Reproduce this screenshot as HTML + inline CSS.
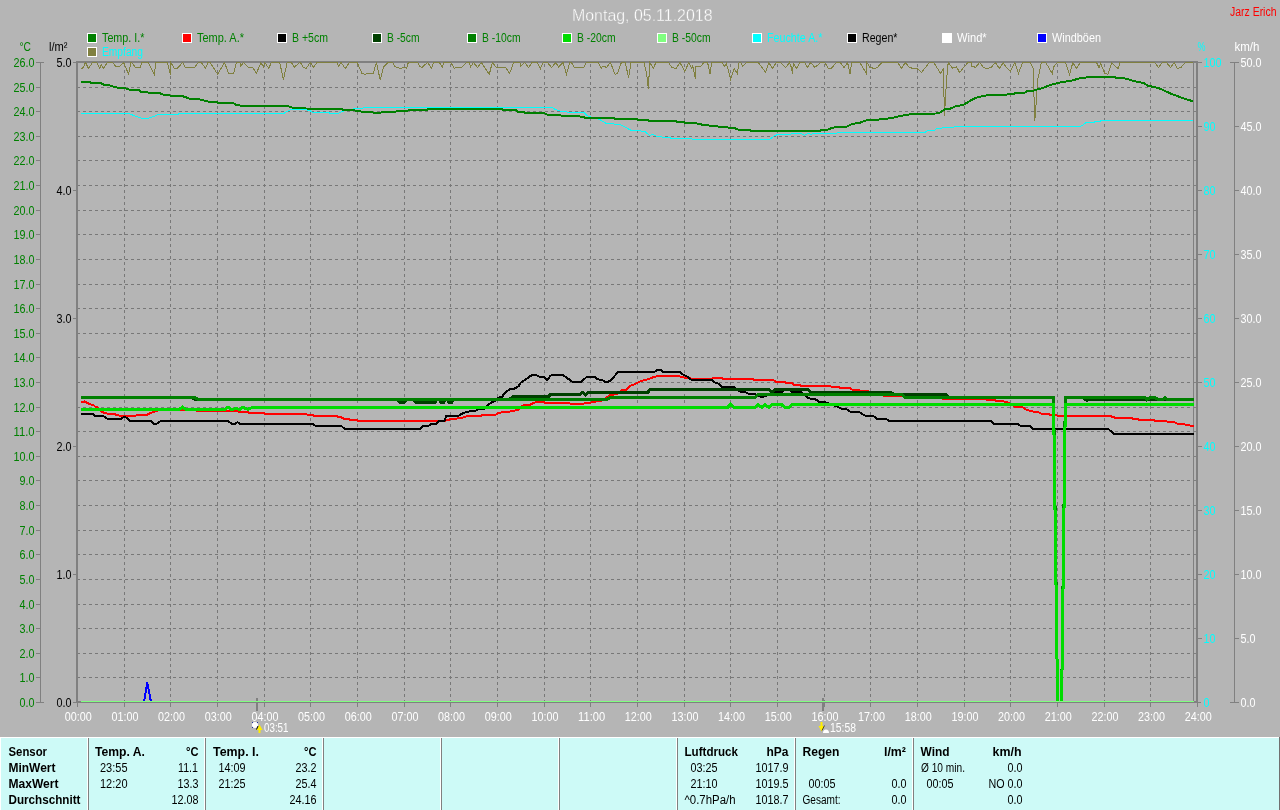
<!DOCTYPE html>
<html lang="de"><head><meta charset="utf-8"><title>Montag, 05.11.2018</title>
<style>
html,body{margin:0;padding:0;background:#b5b5b5;overflow:hidden}
svg{display:block}
svg text{font-family:"Liberation Sans",sans-serif;white-space:pre}
</style></head><body>
<svg width="1280" height="810" viewBox="0 0 1280 810">
<rect x="0" y="0" width="1280" height="810" fill="#b5b5b5"/>
<path d="M77 677.5H1194M77 653.5H1194M77 628.5H1194M77 604.5H1194M77 579.5H1194M77 554.5H1194M77 530.5H1194M77 505.5H1194M77 480.5H1194M77 456.5H1194M77 431.5H1194M77 407.5H1194M77 382.5H1194M77 357.5H1194M77 333.5H1194M77 308.5H1194M77 284.5H1194M77 259.5H1194M77 234.5H1194M77 210.5H1194M77 185.5H1194M77 160.5H1194M77 136.5H1194M77 111.5H1194M77 87.5H1194M124.5 64V701M170.5 64V701M217.5 64V701M264.5 64V701M310.5 64V701M357.5 64V701M404.5 64V701M450.5 64V701M497.5 64V701M544.5 64V701M590.5 64V701M637.5 64V701M684.5 64V701M730.5 64V701M777.5 64V701M824.5 64V701M870.5 64V701M917.5 64V701M964.5 64V701M1010.5 64V701M1057.5 64V701M1104.5 64V701M1150.5 64V701" stroke="#787878" stroke-width="1" stroke-dasharray="3 3" fill="none" shape-rendering="crispEdges"/>
<rect x="256" y="698" width="2" height="13" fill="#808080"/>
<rect x="822" y="698" width="2" height="13" fill="#808080"/>
<rect x="76" y="61" width="1122" height="2" fill="#808080"/>
<rect x="76" y="701" width="1122" height="2" fill="#808080"/>
<rect x="76" y="61" width="2" height="642" fill="#808080"/>
<rect x="1196" y="61" width="2" height="642" fill="#808080"/>
<rect x="1193" y="63" width="1" height="638" fill="#808080"/>
<defs><clipPath id="pc"><rect x="78" y="63" width="1118" height="638"/></clipPath></defs>
<polyline points="81.33,68.50 83.42,67.62 85.44,62.50 88.50,68.50 92.44,62.50 96.81,62.50 99.88,68.33 101.19,64.30 103.38,68.50 107.31,62.50 112.56,62.50 116.06,66.75 116.94,65.88 119.12,66.75 123.94,62.50 125.25,66.75 128.57,73.75 130.94,62.50 132.69,63.69 135.31,67.19 140.12,67.19 141.88,62.50 148.00,62.50 150.62,67.19 154.30,74.45 155.88,62.50 167.25,62.50 170.49,74.45 170.93,62.50 174.25,68.33 177.31,68.33 182.56,62.50 185.19,67.19 190.00,67.19 190.05,67.19 194.81,67.19 198.31,62.50 201.38,62.50 205.57,68.33 207.94,62.50 210.12,62.50 217.56,74.19 224.56,62.50 228.50,73.31 233.75,73.31 236.38,62.50 239.88,62.50 240.75,66.31 243.38,62.50 248.19,67.19 252.56,67.19 256.50,73.31 260.88,62.50 263.50,67.19 264.81,62.50 268.75,68.33 271.38,62.50 279.69,62.50 283.45,79.44 287.12,62.50 291.50,62.50 294.12,67.19 299.81,62.50 302.00,64.56 302.05,66.31 305.94,68.67 310.31,62.50 313.38,67.45 316.88,62.50 337.00,62.50 338.75,66.31 340.94,62.50 345.31,68.50 349.25,62.50 357.12,62.50 361.94,73.31 365.00,74.45 367.62,73.31 373.31,73.31 376.38,62.50 380.31,80.31 383.38,67.19 388.19,62.50 392.56,62.50 395.19,66.75 400.88,68.50 403.50,67.19 406.56,68.33 408.31,62.50 414.00,62.50 414.05,62.50 417.94,62.50 419.69,66.31 421.88,67.45 427.56,62.50 431.50,68.33 433.69,62.50 439.38,62.50 442.18,67.19 443.75,62.50 450.75,62.50 454.25,68.33 456.00,67.19 461.69,67.19 466.50,62.50 469.12,62.50 470.70,66.75 473.50,62.50 477.44,67.45 481.38,62.50 489.25,74.45 492.31,62.50 496.25,67.19 505.44,67.19 509.55,73.58 513.75,62.50 519.88,62.50 520.75,66.31 524.25,62.50 526.00,63.69 526.05,64.12 528.45,67.45 532.12,62.50 536.94,62.50 540.44,68.50 543.06,62.50 547.44,62.50 551.55,67.45 555.75,62.50 558.55,67.19 563.19,62.50 566.42,74.45 569.75,62.50 571.50,62.50 574.12,67.19 583.75,67.19 586.38,62.50 598.19,62.50 601.25,68.33 603.00,65.88 606.50,67.45 610.44,62.50 615.08,74.45 617.44,73.31 621.38,62.50 625.31,62.50 628.55,77.69 631.00,62.50 638.00,62.50 638.05,62.50 644.12,62.50 646.75,74.62 648.33,88.62 649.81,62.50 653.31,68.33 655.94,62.50 668.62,62.50 671.69,67.19 676.06,68.50 680.00,62.50 684.81,71.56 688.75,62.50 691.81,68.06 692.69,65.88 695.31,78.56 695.75,66.75 700.12,66.75 704.06,62.50 707.56,62.50 710.19,74.19 711.50,62.50 722.00,62.50 724.62,66.31 726.38,63.25 730.58,79.00 734.25,68.50 737.31,73.58 739.06,62.50 740.81,62.50 742.56,66.31 746.50,62.50 750.00,62.50 750.05,62.50 758.31,62.50 765.58,72.44 768.81,62.50 772.31,68.50 776.25,62.50 780.62,62.50 785.70,67.45 789.38,62.50 791.12,66.75 792.44,73.58 793.31,63.25 796.38,68.50 799.88,62.50 804.69,62.50 807.31,67.45 810.81,62.50 814.75,67.45 820.88,62.50 824.81,62.50 828.31,68.33 831.38,68.33 836.19,62.50 840.12,62.50 844.06,67.45 847.56,62.50 850.19,74.19 851.50,62.50 859.81,62.50 862.00,65.88 862.05,66.31 866.38,73.58 866.81,62.50 869.88,67.19 874.69,68.67 877.31,67.45 882.12,62.50 897.88,62.50 901.38,68.50 905.31,62.50 909.25,67.19 912.75,68.50 917.12,68.50 921.50,72.44 929.38,62.50 933.75,62.50 940.75,73.58 943.38,68.50 944.42,115.75 946.44,81.62 948.19,62.50 952.56,68.33 956.50,66.75 959.56,72.44 967.88,62.50 971.38,62.50 971.81,66.31 974.00,66.31 974.05,67.45 975.75,67.19 979.69,62.50 983.19,67.19 986.69,68.67 991.06,67.45 995.44,62.50 999.38,68.50 1003.31,62.50 1005.94,67.19 1010.31,71.56 1014.69,62.50 1018.45,73.58 1022.56,62.50 1030.00,62.50 1033.50,68.50 1033.94,94.75 1034.55,120.56 1035.69,114.00 1036.12,101.75 1037.88,79.00 1041.38,62.50 1045.75,62.50 1052.31,73.58 1053.62,66.75 1057.56,62.50 1065.44,62.50 1069.55,74.45 1072.88,62.50 1076.38,68.50 1080.31,62.50 1086.00,62.50 1086.05,62.50 1096.50,62.50 1099.12,67.62 1100.44,63.25 1104.81,73.31 1107.88,74.19 1111.81,62.50 1116.19,67.19 1118.38,68.50 1119.69,62.50 1154.69,62.50 1158.62,67.45 1162.12,62.50 1166.50,62.50 1170.44,67.45 1174.38,62.50 1177.44,68.50 1180.94,67.45 1185.31,62.50 1192.75,62.50" stroke="#808040" stroke-width="1" fill="none" shape-rendering="crispEdges" stroke-linejoin="miter"/>
<polyline points="81.25,113.40 125.00,113.40 128.50,113.60 141.00,118.00 148.00,118.50 155.00,116.00 158.00,114.50 178.00,114.30 179.00,113.40 235.00,113.40 283.75,113.40 290.00,110.00 296.00,109.40 305.00,109.40 310.00,110.60 312.50,112.50 328.75,112.50 330.00,113.40 338.00,113.40 342.50,111.25 355.00,108.50 362.50,108.50 363.75,107.50 395.00,107.50 552.50,107.50 553.75,108.50 555.00,109.40 561.25,111.25 568.75,112.25 583.75,112.25 588.00,116.25 599.40,119.40 606.25,123.50 620.00,124.40 631.25,130.40 644.40,131.25 650.00,135.60 652.50,134.10 656.25,136.25 671.25,138.10 691.25,138.50 692.50,139.60 715.00,139.60 769.40,139.60 775.00,135.40 778.75,134.40 790.00,134.40 791.90,133.50 801.25,133.50 804.40,135.40 807.50,133.50 809.40,133.50 811.00,134.50 812.50,133.50 836.25,133.50 837.50,132.50 875.00,132.50 925.00,132.50 927.50,130.60 934.40,130.40 936.90,128.50 941.25,128.50 942.50,127.50 953.00,127.50 954.40,126.50 1035.00,126.50 1080.60,126.50 1086.25,122.50 1093.75,122.50 1095.00,121.60 1100.00,121.60 1101.25,120.40 1193.00,120.40" stroke="#00ffff" stroke-width="1" fill="none" shape-rendering="crispEdges" stroke-linejoin="miter"/>
<polyline points="81.25,81.90 89.40,81.90 90.60,82.75 100.00,82.75 103.75,84.60 108.00,85.00 117.50,87.75 125.00,88.10 129.40,89.75 138.75,90.00 141.25,91.90 147.50,92.25 148.75,92.90 158.75,92.90 163.75,94.75 168.75,95.00 171.25,95.90 181.90,95.90 190.00,98.75 198.00,99.00 209.40,101.90 216.25,102.10 218.75,102.90 232.50,103.10 235.00,103.75 236.00,105.00 243.75,106.00 287.50,106.00 292.00,107.50 310.00,108.75 341.00,109.00 343.75,110.00 357.00,110.60 362.50,111.90 372.50,112.50 380.00,112.75 382.50,112.10 395.00,112.10 397.50,110.90 407.50,110.90 408.75,109.75 427.50,109.75 428.75,108.75 501.25,108.75 502.50,109.75 515.60,109.75 517.50,111.90 523.75,112.10 525.00,112.90 543.75,112.90 547.50,114.75 555.00,115.00 562.50,115.60 578.75,116.25 586.25,117.90 613.75,117.90 615.00,118.75 636.90,119.00 638.00,119.75 648.00,120.00 649.40,120.90 675.60,120.90 676.90,121.90 683.75,122.10 685.00,122.90 695.00,123.10 703.75,125.00 715.00,126.10 722.50,127.25 733.75,127.75 738.75,129.75 750.00,130.00 751.25,130.90 820.00,130.90 821.25,130.00 827.50,129.75 832.50,127.75 837.50,126.90 846.90,126.60 852.50,123.75 858.75,123.10 867.50,120.00 875.00,119.90 886.25,118.75 893.75,117.50 906.25,114.75 917.50,113.75 936.25,113.50 940.00,112.50 945.00,109.00 950.00,108.75 955.00,106.50 963.75,104.75 972.50,99.40 976.25,97.75 985.00,95.60 992.50,94.75 1006.25,94.75 1008.75,93.75 1013.75,93.75 1016.25,92.90 1025.00,92.50 1027.50,91.00 1033.00,91.00 1035.00,90.00 1043.75,87.75 1051.25,84.60 1062.50,81.90 1070.00,81.00 1081.25,77.90 1090.00,77.10 1115.00,77.10 1116.25,77.90 1123.75,78.10 1135.00,81.25 1143.75,83.10 1147.50,85.60 1158.75,88.10 1171.25,93.75 1182.50,98.10 1193.00,101.25" stroke="#008000" stroke-width="2" fill="none" shape-rendering="crispEdges" stroke-linejoin="miter"/>
<polyline points="81.25,402.25 84.40,401.50 87.50,403.10 90.00,404.40 93.00,404.75 95.60,406.90 98.00,407.50 100.60,411.25 105.00,413.10 108.75,414.00 115.00,414.40 120.60,415.90 135.00,415.90 136.90,415.00 146.90,415.00 150.00,413.10 155.00,411.50 158.00,410.30 196.00,410.30 198.00,411.25 235.00,411.25 239.40,411.60 247.50,411.90 249.40,412.90 263.75,413.10 265.00,414.00 305.60,414.00 307.50,414.75 312.50,415.00 314.40,415.90 336.90,415.90 338.00,416.90 341.25,417.25 343.75,418.75 348.75,419.00 350.00,420.00 356.90,420.00 358.00,421.00 395.00,421.00 443.75,421.00 450.00,419.40 462.50,417.75 467.50,415.90 481.25,415.60 482.50,414.75 495.60,414.75 498.75,412.75 512.50,411.25 518.75,409.40 522.50,405.60 530.00,404.75 533.75,402.75 538.75,401.50 543.75,401.90 545.00,402.75 555.00,403.10 569.40,403.40 571.25,404.00 583.00,404.00 585.00,403.10 590.00,402.90 592.50,401.90 601.25,401.00 607.00,397.10 610.60,395.00 617.50,394.00 622.00,390.40 626.25,390.00 629.40,386.25 635.00,384.00 641.25,381.00 647.50,379.40 655.00,376.60 661.25,375.90 678.75,375.90 681.25,376.90 686.25,377.90 690.60,378.40 692.50,378.75 711.25,378.75 713.00,377.90 715.00,377.90 722.00,378.10 723.00,379.00 753.00,379.00 754.40,380.00 773.00,380.00 776.25,381.90 785.00,382.25 787.00,383.10 792.00,383.10 794.40,385.00 800.00,385.25 801.25,386.00 830.00,386.00 832.00,386.90 838.75,386.90 840.00,387.90 850.00,387.90 852.50,390.00 858.75,390.00 860.60,390.60 866.25,390.60 870.00,392.00 880.00,394.50 886.25,396.25 902.00,396.25 906.00,397.50 940.00,397.80 944.40,399.30 985.60,399.30 987.00,400.25 995.00,400.25 997.00,401.25 1003.00,401.25 1008.75,402.75 1014.40,406.50 1022.50,407.25 1027.00,410.00 1035.00,411.90 1038.00,411.90 1041.25,413.75 1048.75,414.00 1050.60,415.00 1056.25,415.00 1058.00,415.90 1110.00,415.90 1115.00,417.75 1131.25,417.75 1132.50,418.75 1138.00,418.75 1139.40,420.00 1153.75,420.00 1155.00,421.00 1166.25,421.00 1168.00,421.90 1173.75,421.90 1177.50,423.75 1183.75,424.00 1187.50,425.25 1193.75,426.00" stroke="#ff0000" stroke-width="2" fill="none" shape-rendering="crispEdges" stroke-linejoin="miter"/>
<polyline points="81.25,414.00 93.00,414.00 95.00,415.90 103.75,416.25 107.50,418.75 121.25,418.75 123.75,416.90 126.25,417.50 130.00,421.00 151.25,421.00 154.40,424.10 156.25,424.10 160.60,421.00 228.00,421.00 232.00,424.00 235.00,424.00 237.50,422.10 240.00,424.00 312.50,424.00 315.60,425.90 341.25,425.90 344.40,428.75 395.00,428.75 420.00,428.75 423.00,425.90 428.75,425.60 431.25,424.10 436.25,423.75 438.75,421.25 444.40,420.90 446.25,416.25 450.00,415.60 458.75,415.60 463.00,413.10 468.75,411.50 474.40,411.25 478.00,409.40 483.75,409.10 487.00,405.60 491.25,402.50 495.00,401.25 498.75,397.50 502.00,396.90 505.00,392.75 510.00,389.10 514.40,388.75 518.75,386.00 520.60,382.75 526.25,379.00 530.60,375.90 533.75,374.75 536.25,375.00 538.75,376.50 543.75,376.90 547.25,380.00 550.60,375.60 555.00,375.00 563.00,375.00 572.50,381.90 581.25,381.90 587.00,376.60 594.40,376.60 597.50,379.40 602.00,379.75 605.00,381.90 608.00,381.90 611.25,380.00 618.00,371.90 654.40,371.90 658.00,369.60 660.00,369.60 663.00,371.90 679.40,371.90 683.75,375.00 688.75,377.50 691.25,379.75 711.25,379.75 714.40,382.25 718.75,383.75 722.00,386.90 733.75,386.90 736.25,388.75 740.60,391.90 745.60,392.25 748.75,393.75 755.00,394.00 757.50,395.00 761.25,396.90 765.00,396.25 770.00,394.00 775.00,392.25 782.00,391.90 784.00,390.00 790.00,390.00 792.00,391.90 801.25,392.25 805.00,395.60 808.75,398.40 815.00,399.00 819.40,401.90 825.00,402.25 830.00,404.00 837.00,406.50 841.25,408.75 846.25,409.00 850.00,411.60 858.75,411.90 865.00,415.60 873.00,415.90 875.00,416.90 877.00,418.75 886.25,418.75 888.75,421.00 991.25,421.00 994.40,424.00 1018.00,424.00 1020.60,425.90 1030.00,425.90 1033.00,428.75 1035.00,428.75 1108.00,428.75 1114.40,434.00 1193.75,434.00" stroke="#000000" stroke-width="2" fill="none" shape-rendering="crispEdges" stroke-linejoin="miter"/>
<polyline points="80.60,397.25 192.00,397.25 195.00,399.60 397.50,399.60 400.00,402.30 404.00,402.30 406.25,399.60 413.00,399.60 415.50,402.30 435.00,402.30 437.00,399.60 439.40,399.60 441.00,402.30 443.50,402.30 445.00,399.60 447.50,399.60 449.00,402.30 451.50,402.30 453.00,399.60 509.00,399.60 512.50,396.90 548.00,396.90 550.60,394.40 580.00,394.40 583.00,392.25 585.60,394.75 588.00,392.50 647.50,392.50 650.00,389.75 769.40,389.75 772.00,392.25 775.00,389.75 808.00,389.75 811.25,392.50 891.25,392.50 894.40,394.40 945.60,394.40 948.75,397.25 1053.60,397.25 1057.60,703.50 1061.60,703.50 1065.30,397.25 1083.00,397.25 1085.50,399.75 1087.00,400.30 1089.00,399.75 1091.00,399.20 1093.00,399.90 1193.75,399.75" stroke="#004000" stroke-width="3" fill="none" shape-rendering="crispEdges" stroke-linejoin="miter" clip-path="url(#pc)"/>
<polyline points="80.60,397.25 195.00,397.25 198.00,399.60 607.00,399.60 610.00,397.25 755.00,397.25 758.00,394.40 902.00,394.40 905.00,397.25 1053.60,397.25 1057.60,703.50 1061.60,703.50 1065.30,397.25 1145.00,397.25 1147.00,399.75 1150.00,397.25 1155.00,397.25 1158.00,399.75 1162.50,399.75 1165.00,397.25 1167.50,399.75 1193.75,399.75" stroke="#008000" stroke-width="3" fill="none" shape-rendering="crispEdges" stroke-linejoin="miter" clip-path="url(#pc)"/>
<polyline points="80.60,409.60 179.00,409.60 182.50,407.00 186.00,409.60 224.50,409.60 228.00,407.25 231.50,409.60 236.00,408.50 240.00,409.40 243.00,407.25 248.00,409.40 252.00,407.50 727.50,407.50 730.60,404.40 733.75,407.50 755.00,407.50 758.00,404.60 762.00,407.50 765.00,404.40 768.75,407.50 772.00,404.40 781.25,404.40 785.00,407.50 788.75,407.50 792.00,404.40 1053.60,404.40 1057.60,703.50 1061.60,703.50 1065.30,404.40 1194.00,404.40" stroke="#00dc00" stroke-width="3" fill="none" shape-rendering="crispEdges" stroke-linejoin="miter" clip-path="url(#pc)"/>
<rect x="81" y="701" width="1113" height="1" fill="#80ff80"/>
<polyline points="144.20,701.00 147.20,682.50 150.80,701.00" stroke="#0000ff" stroke-width="2" fill="none" shape-rendering="crispEdges" stroke-linejoin="miter"/>
<rect x="77" y="702" width="1" height="5" fill="#808080"/>
<rect x="124" y="702" width="1" height="5" fill="#808080"/>
<rect x="170" y="702" width="1" height="5" fill="#808080"/>
<rect x="217" y="702" width="1" height="5" fill="#808080"/>
<rect x="264" y="702" width="1" height="5" fill="#808080"/>
<rect x="310" y="702" width="1" height="5" fill="#808080"/>
<rect x="357" y="702" width="1" height="5" fill="#808080"/>
<rect x="404" y="702" width="1" height="5" fill="#808080"/>
<rect x="450" y="702" width="1" height="5" fill="#808080"/>
<rect x="497" y="702" width="1" height="5" fill="#808080"/>
<rect x="544" y="702" width="1" height="5" fill="#808080"/>
<rect x="590" y="702" width="1" height="5" fill="#808080"/>
<rect x="637" y="702" width="1" height="5" fill="#808080"/>
<rect x="684" y="702" width="1" height="5" fill="#808080"/>
<rect x="730" y="702" width="1" height="5" fill="#808080"/>
<rect x="777" y="702" width="1" height="5" fill="#808080"/>
<rect x="824" y="702" width="1" height="5" fill="#808080"/>
<rect x="870" y="702" width="1" height="5" fill="#808080"/>
<rect x="917" y="702" width="1" height="5" fill="#808080"/>
<rect x="964" y="702" width="1" height="5" fill="#808080"/>
<rect x="1010" y="702" width="1" height="5" fill="#808080"/>
<rect x="1057" y="702" width="1" height="5" fill="#808080"/>
<rect x="1104" y="702" width="1" height="5" fill="#808080"/>
<rect x="1150" y="702" width="1" height="5" fill="#808080"/>
<rect x="1197" y="702" width="1" height="5" fill="#808080"/>
<rect x="40" y="62" width="1" height="641" fill="#808080"/>
<rect x="36" y="702" width="8" height="1" fill="#808080"/>
<rect x="36" y="677" width="4" height="1" fill="#808080"/>
<rect x="36" y="653" width="4" height="1" fill="#808080"/>
<rect x="36" y="628" width="4" height="1" fill="#808080"/>
<rect x="36" y="604" width="4" height="1" fill="#808080"/>
<rect x="36" y="579" width="4" height="1" fill="#808080"/>
<rect x="36" y="554" width="4" height="1" fill="#808080"/>
<rect x="36" y="530" width="4" height="1" fill="#808080"/>
<rect x="36" y="505" width="4" height="1" fill="#808080"/>
<rect x="36" y="480" width="4" height="1" fill="#808080"/>
<rect x="36" y="456" width="4" height="1" fill="#808080"/>
<rect x="36" y="431" width="4" height="1" fill="#808080"/>
<rect x="36" y="407" width="4" height="1" fill="#808080"/>
<rect x="36" y="382" width="4" height="1" fill="#808080"/>
<rect x="36" y="357" width="4" height="1" fill="#808080"/>
<rect x="36" y="333" width="4" height="1" fill="#808080"/>
<rect x="36" y="308" width="4" height="1" fill="#808080"/>
<rect x="36" y="284" width="4" height="1" fill="#808080"/>
<rect x="36" y="259" width="4" height="1" fill="#808080"/>
<rect x="36" y="234" width="4" height="1" fill="#808080"/>
<rect x="36" y="210" width="4" height="1" fill="#808080"/>
<rect x="36" y="185" width="4" height="1" fill="#808080"/>
<rect x="36" y="160" width="4" height="1" fill="#808080"/>
<rect x="36" y="136" width="4" height="1" fill="#808080"/>
<rect x="36" y="111" width="4" height="1" fill="#808080"/>
<rect x="36" y="87" width="4" height="1" fill="#808080"/>
<rect x="36" y="62" width="8" height="1" fill="#808080"/>
<rect x="73" y="62" width="3" height="1" fill="#808080"/>
<rect x="73" y="190" width="3" height="1" fill="#808080"/>
<rect x="73" y="318" width="3" height="1" fill="#808080"/>
<rect x="73" y="446" width="3" height="1" fill="#808080"/>
<rect x="73" y="574" width="3" height="1" fill="#808080"/>
<rect x="73" y="702" width="3" height="1" fill="#808080"/>
<rect x="1198" y="62" width="4" height="1" fill="#808080"/>
<rect x="1198" y="126" width="4" height="1" fill="#808080"/>
<rect x="1198" y="190" width="4" height="1" fill="#808080"/>
<rect x="1198" y="254" width="4" height="1" fill="#808080"/>
<rect x="1198" y="318" width="4" height="1" fill="#808080"/>
<rect x="1198" y="382" width="4" height="1" fill="#808080"/>
<rect x="1198" y="446" width="4" height="1" fill="#808080"/>
<rect x="1198" y="510" width="4" height="1" fill="#808080"/>
<rect x="1198" y="574" width="4" height="1" fill="#808080"/>
<rect x="1198" y="638" width="4" height="1" fill="#808080"/>
<rect x="1198" y="702" width="3" height="1" fill="#808080"/>
<rect x="1194" y="677" width="2" height="1" fill="#808080"/>
<rect x="1194" y="653" width="2" height="1" fill="#808080"/>
<rect x="1194" y="628" width="2" height="1" fill="#808080"/>
<rect x="1194" y="604" width="2" height="1" fill="#808080"/>
<rect x="1194" y="579" width="2" height="1" fill="#808080"/>
<rect x="1194" y="554" width="2" height="1" fill="#808080"/>
<rect x="1194" y="530" width="2" height="1" fill="#808080"/>
<rect x="1194" y="505" width="2" height="1" fill="#808080"/>
<rect x="1194" y="480" width="2" height="1" fill="#808080"/>
<rect x="1194" y="456" width="2" height="1" fill="#808080"/>
<rect x="1194" y="431" width="2" height="1" fill="#808080"/>
<rect x="1194" y="407" width="2" height="1" fill="#808080"/>
<rect x="1194" y="382" width="2" height="1" fill="#808080"/>
<rect x="1194" y="357" width="2" height="1" fill="#808080"/>
<rect x="1194" y="333" width="2" height="1" fill="#808080"/>
<rect x="1194" y="308" width="2" height="1" fill="#808080"/>
<rect x="1194" y="284" width="2" height="1" fill="#808080"/>
<rect x="1194" y="259" width="2" height="1" fill="#808080"/>
<rect x="1194" y="234" width="2" height="1" fill="#808080"/>
<rect x="1194" y="210" width="2" height="1" fill="#808080"/>
<rect x="1194" y="185" width="2" height="1" fill="#808080"/>
<rect x="1194" y="160" width="2" height="1" fill="#808080"/>
<rect x="1194" y="136" width="2" height="1" fill="#808080"/>
<rect x="1194" y="111" width="2" height="1" fill="#808080"/>
<rect x="1194" y="87" width="2" height="1" fill="#808080"/>
<rect x="1234" y="62" width="1" height="641" fill="#808080"/>
<rect x="1230" y="62" width="9" height="1" fill="#808080"/>
<rect x="1235" y="126" width="4" height="1" fill="#808080"/>
<rect x="1235" y="190" width="4" height="1" fill="#808080"/>
<rect x="1235" y="254" width="4" height="1" fill="#808080"/>
<rect x="1235" y="318" width="4" height="1" fill="#808080"/>
<rect x="1235" y="382" width="4" height="1" fill="#808080"/>
<rect x="1235" y="446" width="4" height="1" fill="#808080"/>
<rect x="1235" y="510" width="4" height="1" fill="#808080"/>
<rect x="1235" y="574" width="4" height="1" fill="#808080"/>
<rect x="1235" y="638" width="4" height="1" fill="#808080"/>
<rect x="1230" y="702" width="9" height="1" fill="#808080"/>
<rect x="87" y="33" width="10" height="10" fill="#ffffff"/>
<rect x="88" y="34" width="8" height="8" fill="#008000"/>
<rect x="182" y="33" width="10" height="10" fill="#ffffff"/>
<rect x="183" y="34" width="8" height="8" fill="#ff0000"/>
<rect x="277" y="33" width="10" height="10" fill="#ffffff"/>
<rect x="278" y="34" width="8" height="8" fill="#000000"/>
<rect x="372" y="33" width="10" height="10" fill="#ffffff"/>
<rect x="373" y="34" width="8" height="8" fill="#004000"/>
<rect x="467" y="33" width="10" height="10" fill="#ffffff"/>
<rect x="468" y="34" width="8" height="8" fill="#008000"/>
<rect x="562" y="33" width="10" height="10" fill="#ffffff"/>
<rect x="563" y="34" width="8" height="8" fill="#00dc00"/>
<rect x="657" y="33" width="10" height="10" fill="#ffffff"/>
<rect x="658" y="34" width="8" height="8" fill="#80ff80"/>
<rect x="752" y="33" width="10" height="10" fill="#ffffff"/>
<rect x="753" y="34" width="8" height="8" fill="#00ffff"/>
<rect x="847" y="33" width="10" height="10" fill="#ffffff"/>
<rect x="848" y="34" width="8" height="8" fill="#000000"/>
<rect x="942" y="33" width="10" height="10" fill="#ffffff"/>
<rect x="943" y="34" width="8" height="8" fill="#ffffff"/>
<rect x="1037" y="33" width="10" height="10" fill="#ffffff"/>
<rect x="1038" y="34" width="8" height="8" fill="#0000ff"/>
<rect x="87" y="47" width="10" height="10" fill="#ffffff"/>
<rect x="88" y="48" width="8" height="8" fill="#808040"/>
<circle cx="255" cy="725" r="3" fill="#ffffff"/>
<path d="M252 722h1v1h-1zM257 722h1v1h-1zM252 727h1v1h-1z" fill="#2030a0"/>
<path d="M259.5 724.5L262.5 730H260.5V733H258.5V730H256.5Z" fill="#ffee00" stroke="#000" stroke-width="0" />
<path d="M258 726l-1.5 3.5" stroke="#000" stroke-width="1" fill="none"/>
<path d="M820.5 722V726H818.5L821.5 731.5L824.5 726H822.5V722Z" fill="#ffee00"/>
<path d="M824.5 725.5l-2.5 5" stroke="#222" stroke-width="0.8" fill="none"/>
<path d="M823 733a3 3.5 0 0 1 6 0z" fill="#ffffff"/>
<rect x="0" y="737" width="1280" height="73" fill="#cdfaf7"/>
<rect x="0" y="737" width="1279" height="1" fill="#ffffff"/>
<rect x="0" y="737" width="1" height="73" fill="#ffffff"/>
<rect x="1279" y="737" width="1" height="73" fill="#707070"/>
<rect x="87" y="738" width="1" height="72" fill="#ffffff"/>
<rect x="88" y="738" width="1" height="72" fill="#808080"/>
<rect x="204" y="738" width="1" height="72" fill="#ffffff"/>
<rect x="205" y="738" width="1" height="72" fill="#808080"/>
<rect x="322" y="738" width="1" height="72" fill="#ffffff"/>
<rect x="323" y="738" width="1" height="72" fill="#808080"/>
<rect x="440" y="738" width="1" height="72" fill="#ffffff"/>
<rect x="441" y="738" width="1" height="72" fill="#808080"/>
<rect x="558" y="738" width="1" height="72" fill="#ffffff"/>
<rect x="559" y="738" width="1" height="72" fill="#808080"/>
<rect x="676" y="738" width="1" height="72" fill="#ffffff"/>
<rect x="677" y="738" width="1" height="72" fill="#808080"/>
<rect x="794" y="738" width="1" height="72" fill="#ffffff"/>
<rect x="795" y="738" width="1" height="72" fill="#808080"/>
<rect x="912" y="738" width="1" height="72" fill="#ffffff"/>
<rect x="913" y="738" width="1" height="72" fill="#808080"/>
<g style="filter:contrast(1)">
<text x="78.3" y="721.0" fill="#ffffff" font-size="12.5" text-anchor="middle" textLength="27.0" lengthAdjust="spacingAndGlyphs">00:00</text>
<text x="125.0" y="721.0" fill="#ffffff" font-size="12.5" text-anchor="middle" textLength="27.0" lengthAdjust="spacingAndGlyphs">01:00</text>
<text x="171.6" y="721.0" fill="#ffffff" font-size="12.5" text-anchor="middle" textLength="27.0" lengthAdjust="spacingAndGlyphs">02:00</text>
<text x="218.3" y="721.0" fill="#ffffff" font-size="12.5" text-anchor="middle" textLength="27.0" lengthAdjust="spacingAndGlyphs">03:00</text>
<text x="265.0" y="721.0" fill="#ffffff" font-size="12.5" text-anchor="middle" textLength="27.0" lengthAdjust="spacingAndGlyphs">04:00</text>
<text x="311.6" y="721.0" fill="#ffffff" font-size="12.5" text-anchor="middle" textLength="27.0" lengthAdjust="spacingAndGlyphs">05:00</text>
<text x="358.3" y="721.0" fill="#ffffff" font-size="12.5" text-anchor="middle" textLength="27.0" lengthAdjust="spacingAndGlyphs">06:00</text>
<text x="405.0" y="721.0" fill="#ffffff" font-size="12.5" text-anchor="middle" textLength="27.0" lengthAdjust="spacingAndGlyphs">07:00</text>
<text x="451.6" y="721.0" fill="#ffffff" font-size="12.5" text-anchor="middle" textLength="27.0" lengthAdjust="spacingAndGlyphs">08:00</text>
<text x="498.3" y="721.0" fill="#ffffff" font-size="12.5" text-anchor="middle" textLength="27.0" lengthAdjust="spacingAndGlyphs">09:00</text>
<text x="545.0" y="721.0" fill="#ffffff" font-size="12.5" text-anchor="middle" textLength="27.0" lengthAdjust="spacingAndGlyphs">10:00</text>
<text x="591.6" y="721.0" fill="#ffffff" font-size="12.5" text-anchor="middle" textLength="27.0" lengthAdjust="spacingAndGlyphs">11:00</text>
<text x="638.3" y="721.0" fill="#ffffff" font-size="12.5" text-anchor="middle" textLength="27.0" lengthAdjust="spacingAndGlyphs">12:00</text>
<text x="685.0" y="721.0" fill="#ffffff" font-size="12.5" text-anchor="middle" textLength="27.0" lengthAdjust="spacingAndGlyphs">13:00</text>
<text x="731.6" y="721.0" fill="#ffffff" font-size="12.5" text-anchor="middle" textLength="27.0" lengthAdjust="spacingAndGlyphs">14:00</text>
<text x="778.3" y="721.0" fill="#ffffff" font-size="12.5" text-anchor="middle" textLength="27.0" lengthAdjust="spacingAndGlyphs">15:00</text>
<text x="825.0" y="721.0" fill="#ffffff" font-size="12.5" text-anchor="middle" textLength="27.0" lengthAdjust="spacingAndGlyphs">16:00</text>
<text x="871.6" y="721.0" fill="#ffffff" font-size="12.5" text-anchor="middle" textLength="27.0" lengthAdjust="spacingAndGlyphs">17:00</text>
<text x="918.3" y="721.0" fill="#ffffff" font-size="12.5" text-anchor="middle" textLength="27.0" lengthAdjust="spacingAndGlyphs">18:00</text>
<text x="965.0" y="721.0" fill="#ffffff" font-size="12.5" text-anchor="middle" textLength="27.0" lengthAdjust="spacingAndGlyphs">19:00</text>
<text x="1011.6" y="721.0" fill="#ffffff" font-size="12.5" text-anchor="middle" textLength="27.0" lengthAdjust="spacingAndGlyphs">20:00</text>
<text x="1058.3" y="721.0" fill="#ffffff" font-size="12.5" text-anchor="middle" textLength="27.0" lengthAdjust="spacingAndGlyphs">21:00</text>
<text x="1105.0" y="721.0" fill="#ffffff" font-size="12.5" text-anchor="middle" textLength="27.0" lengthAdjust="spacingAndGlyphs">22:00</text>
<text x="1151.6" y="721.0" fill="#ffffff" font-size="12.5" text-anchor="middle" textLength="27.0" lengthAdjust="spacingAndGlyphs">23:00</text>
<text x="1198.3" y="721.0" fill="#ffffff" font-size="12.5" text-anchor="middle" textLength="27.0" lengthAdjust="spacingAndGlyphs">24:00</text>
<text x="34.5" y="707.0" fill="#008000" font-size="12.5" text-anchor="end" textLength="15.0" lengthAdjust="spacingAndGlyphs">0.0</text>
<text x="34.5" y="682.0" fill="#008000" font-size="12.5" text-anchor="end" textLength="15.0" lengthAdjust="spacingAndGlyphs">1.0</text>
<text x="34.5" y="658.0" fill="#008000" font-size="12.5" text-anchor="end" textLength="15.0" lengthAdjust="spacingAndGlyphs">2.0</text>
<text x="34.5" y="633.0" fill="#008000" font-size="12.5" text-anchor="end" textLength="15.0" lengthAdjust="spacingAndGlyphs">3.0</text>
<text x="34.5" y="609.0" fill="#008000" font-size="12.5" text-anchor="end" textLength="15.0" lengthAdjust="spacingAndGlyphs">4.0</text>
<text x="34.5" y="584.0" fill="#008000" font-size="12.5" text-anchor="end" textLength="15.0" lengthAdjust="spacingAndGlyphs">5.0</text>
<text x="34.5" y="559.0" fill="#008000" font-size="12.5" text-anchor="end" textLength="15.0" lengthAdjust="spacingAndGlyphs">6.0</text>
<text x="34.5" y="535.0" fill="#008000" font-size="12.5" text-anchor="end" textLength="15.0" lengthAdjust="spacingAndGlyphs">7.0</text>
<text x="34.5" y="510.0" fill="#008000" font-size="12.5" text-anchor="end" textLength="15.0" lengthAdjust="spacingAndGlyphs">8.0</text>
<text x="34.5" y="485.0" fill="#008000" font-size="12.5" text-anchor="end" textLength="15.0" lengthAdjust="spacingAndGlyphs">9.0</text>
<text x="34.5" y="461.0" fill="#008000" font-size="12.5" text-anchor="end" textLength="21.0" lengthAdjust="spacingAndGlyphs">10.0</text>
<text x="34.5" y="436.0" fill="#008000" font-size="12.5" text-anchor="end" textLength="21.0" lengthAdjust="spacingAndGlyphs">11.0</text>
<text x="34.5" y="412.0" fill="#008000" font-size="12.5" text-anchor="end" textLength="21.0" lengthAdjust="spacingAndGlyphs">12.0</text>
<text x="34.5" y="387.0" fill="#008000" font-size="12.5" text-anchor="end" textLength="21.0" lengthAdjust="spacingAndGlyphs">13.0</text>
<text x="34.5" y="362.0" fill="#008000" font-size="12.5" text-anchor="end" textLength="21.0" lengthAdjust="spacingAndGlyphs">14.0</text>
<text x="34.5" y="338.0" fill="#008000" font-size="12.5" text-anchor="end" textLength="21.0" lengthAdjust="spacingAndGlyphs">15.0</text>
<text x="34.5" y="313.0" fill="#008000" font-size="12.5" text-anchor="end" textLength="21.0" lengthAdjust="spacingAndGlyphs">16.0</text>
<text x="34.5" y="289.0" fill="#008000" font-size="12.5" text-anchor="end" textLength="21.0" lengthAdjust="spacingAndGlyphs">17.0</text>
<text x="34.5" y="264.0" fill="#008000" font-size="12.5" text-anchor="end" textLength="21.0" lengthAdjust="spacingAndGlyphs">18.0</text>
<text x="34.5" y="239.0" fill="#008000" font-size="12.5" text-anchor="end" textLength="21.0" lengthAdjust="spacingAndGlyphs">19.0</text>
<text x="34.5" y="215.0" fill="#008000" font-size="12.5" text-anchor="end" textLength="21.0" lengthAdjust="spacingAndGlyphs">20.0</text>
<text x="34.5" y="190.0" fill="#008000" font-size="12.5" text-anchor="end" textLength="21.0" lengthAdjust="spacingAndGlyphs">21.0</text>
<text x="34.5" y="165.0" fill="#008000" font-size="12.5" text-anchor="end" textLength="21.0" lengthAdjust="spacingAndGlyphs">22.0</text>
<text x="34.5" y="141.0" fill="#008000" font-size="12.5" text-anchor="end" textLength="21.0" lengthAdjust="spacingAndGlyphs">23.0</text>
<text x="34.5" y="116.0" fill="#008000" font-size="12.5" text-anchor="end" textLength="21.0" lengthAdjust="spacingAndGlyphs">24.0</text>
<text x="34.5" y="92.0" fill="#008000" font-size="12.5" text-anchor="end" textLength="21.0" lengthAdjust="spacingAndGlyphs">25.0</text>
<text x="34.5" y="67.0" fill="#008000" font-size="12.5" text-anchor="end" textLength="21.0" lengthAdjust="spacingAndGlyphs">26.0</text>
<text x="19.5" y="51.0" fill="#008000" font-size="12.5" text-anchor="start" textLength="11.5" lengthAdjust="spacingAndGlyphs">°C</text>
<text x="71.5" y="67.0" fill="#000000" font-size="12.5" text-anchor="end" textLength="15.0" lengthAdjust="spacingAndGlyphs">5.0</text>
<text x="71.5" y="195.0" fill="#000000" font-size="12.5" text-anchor="end" textLength="15.0" lengthAdjust="spacingAndGlyphs">4.0</text>
<text x="71.5" y="323.0" fill="#000000" font-size="12.5" text-anchor="end" textLength="15.0" lengthAdjust="spacingAndGlyphs">3.0</text>
<text x="71.5" y="451.0" fill="#000000" font-size="12.5" text-anchor="end" textLength="15.0" lengthAdjust="spacingAndGlyphs">2.0</text>
<text x="71.5" y="579.0" fill="#000000" font-size="12.5" text-anchor="end" textLength="15.0" lengthAdjust="spacingAndGlyphs">1.0</text>
<text x="71.5" y="707.0" fill="#000000" font-size="12.5" text-anchor="end" textLength="15.0" lengthAdjust="spacingAndGlyphs">0.0</text>
<text x="49.0" y="51.0" fill="#000000" font-size="12.5" text-anchor="start" textLength="18.5" lengthAdjust="spacingAndGlyphs">l/m²</text>
<text x="1203.5" y="67.0" fill="#00ffff" font-size="12.5" text-anchor="start" textLength="18.0" lengthAdjust="spacingAndGlyphs">100</text>
<text x="1203.5" y="131.0" fill="#00ffff" font-size="12.5" text-anchor="start" textLength="12.0" lengthAdjust="spacingAndGlyphs">90</text>
<text x="1203.5" y="195.0" fill="#00ffff" font-size="12.5" text-anchor="start" textLength="12.0" lengthAdjust="spacingAndGlyphs">80</text>
<text x="1203.5" y="259.0" fill="#00ffff" font-size="12.5" text-anchor="start" textLength="12.0" lengthAdjust="spacingAndGlyphs">70</text>
<text x="1203.5" y="323.0" fill="#00ffff" font-size="12.5" text-anchor="start" textLength="12.0" lengthAdjust="spacingAndGlyphs">60</text>
<text x="1203.5" y="387.0" fill="#00ffff" font-size="12.5" text-anchor="start" textLength="12.0" lengthAdjust="spacingAndGlyphs">50</text>
<text x="1203.5" y="451.0" fill="#00ffff" font-size="12.5" text-anchor="start" textLength="12.0" lengthAdjust="spacingAndGlyphs">40</text>
<text x="1203.5" y="515.0" fill="#00ffff" font-size="12.5" text-anchor="start" textLength="12.0" lengthAdjust="spacingAndGlyphs">30</text>
<text x="1203.5" y="579.0" fill="#00ffff" font-size="12.5" text-anchor="start" textLength="12.0" lengthAdjust="spacingAndGlyphs">20</text>
<text x="1203.5" y="643.0" fill="#00ffff" font-size="12.5" text-anchor="start" textLength="12.0" lengthAdjust="spacingAndGlyphs">10</text>
<text x="1203.5" y="707.0" fill="#00ffff" font-size="12.5" text-anchor="start" textLength="6.0" lengthAdjust="spacingAndGlyphs">0</text>
<text x="1197.5" y="51.0" fill="#00ffff" font-size="12.5" text-anchor="start" textLength="8.0" lengthAdjust="spacingAndGlyphs">%</text>
<text x="1240.5" y="67.0" fill="#ffffff" font-size="12.5" text-anchor="start" textLength="21.0" lengthAdjust="spacingAndGlyphs">50.0</text>
<text x="1240.5" y="131.0" fill="#ffffff" font-size="12.5" text-anchor="start" textLength="21.0" lengthAdjust="spacingAndGlyphs">45.0</text>
<text x="1240.5" y="195.0" fill="#ffffff" font-size="12.5" text-anchor="start" textLength="21.0" lengthAdjust="spacingAndGlyphs">40.0</text>
<text x="1240.5" y="259.0" fill="#ffffff" font-size="12.5" text-anchor="start" textLength="21.0" lengthAdjust="spacingAndGlyphs">35.0</text>
<text x="1240.5" y="323.0" fill="#ffffff" font-size="12.5" text-anchor="start" textLength="21.0" lengthAdjust="spacingAndGlyphs">30.0</text>
<text x="1240.5" y="387.0" fill="#ffffff" font-size="12.5" text-anchor="start" textLength="21.0" lengthAdjust="spacingAndGlyphs">25.0</text>
<text x="1240.5" y="451.0" fill="#ffffff" font-size="12.5" text-anchor="start" textLength="21.0" lengthAdjust="spacingAndGlyphs">20.0</text>
<text x="1240.5" y="515.0" fill="#ffffff" font-size="12.5" text-anchor="start" textLength="21.0" lengthAdjust="spacingAndGlyphs">15.0</text>
<text x="1240.5" y="579.0" fill="#ffffff" font-size="12.5" text-anchor="start" textLength="21.0" lengthAdjust="spacingAndGlyphs">10.0</text>
<text x="1240.5" y="643.0" fill="#ffffff" font-size="12.5" text-anchor="start" textLength="15.0" lengthAdjust="spacingAndGlyphs">5.0</text>
<text x="1240.5" y="707.0" fill="#ffffff" font-size="12.5" text-anchor="start" textLength="15.0" lengthAdjust="spacingAndGlyphs">0.0</text>
<text x="1234.5" y="51.0" fill="#ffffff" font-size="12.5" text-anchor="start" textLength="25.0" lengthAdjust="spacingAndGlyphs">km/h</text>
<text x="572.0" y="20.7" fill="#ffffff" font-size="16" text-anchor="start" stroke="#b5b5b5" stroke-width="0.35" textLength="140.5" lengthAdjust="spacingAndGlyphs">Montag, 05.11.2018</text>
<text x="1230.0" y="16.0" fill="#ff0000" font-size="12.5" text-anchor="start" textLength="46.5" lengthAdjust="spacingAndGlyphs">Jarz Erich</text>
<text x="102.0" y="42.0" fill="#008000" font-size="12.5" text-anchor="start" textLength="42.5" lengthAdjust="spacingAndGlyphs">Temp. I.*</text>
<text x="197.0" y="42.0" fill="#008000" font-size="12.5" text-anchor="start" textLength="47.0" lengthAdjust="spacingAndGlyphs">Temp. A.*</text>
<text x="292.0" y="42.0" fill="#008000" font-size="12.5" text-anchor="start" textLength="36.0" lengthAdjust="spacingAndGlyphs">B +5cm</text>
<text x="387.0" y="42.0" fill="#008000" font-size="12.5" text-anchor="start" textLength="32.5" lengthAdjust="spacingAndGlyphs">B -5cm</text>
<text x="482.0" y="42.0" fill="#008000" font-size="12.5" text-anchor="start" textLength="38.5" lengthAdjust="spacingAndGlyphs">B -10cm</text>
<text x="577.0" y="42.0" fill="#008000" font-size="12.5" text-anchor="start" textLength="38.5" lengthAdjust="spacingAndGlyphs">B -20cm</text>
<text x="672.0" y="42.0" fill="#008000" font-size="12.5" text-anchor="start" textLength="38.5" lengthAdjust="spacingAndGlyphs">B -50cm</text>
<text x="767.0" y="42.0" fill="#00ffff" font-size="12.5" text-anchor="start" textLength="55.5" lengthAdjust="spacingAndGlyphs">Feuchte A.*</text>
<text x="862.0" y="42.0" fill="#000000" font-size="12.5" text-anchor="start" textLength="35.5" lengthAdjust="spacingAndGlyphs">Regen*</text>
<text x="957.0" y="42.0" fill="#ffffff" font-size="12.5" text-anchor="start" textLength="29.7" lengthAdjust="spacingAndGlyphs">Wind*</text>
<text x="1052.0" y="42.0" fill="#ffffff" font-size="12.5" text-anchor="start" textLength="49.0" lengthAdjust="spacingAndGlyphs">Windböen</text>
<text x="102.0" y="56.0" fill="#00ffff" font-size="12.5" text-anchor="start" textLength="41.0" lengthAdjust="spacingAndGlyphs">Empfang</text>
<text x="264.0" y="732.0" fill="#ffffff" font-size="12.5" text-anchor="start" textLength="24.5" lengthAdjust="spacingAndGlyphs">03:51</text>
<text x="830.0" y="732.0" fill="#ffffff" font-size="12.5" text-anchor="start" textLength="26.0" lengthAdjust="spacingAndGlyphs">15:58</text>
<text x="8.5" y="756.0" fill="#000000" font-size="12.5" text-anchor="start" font-weight="bold" textLength="38.5" lengthAdjust="spacingAndGlyphs">Sensor</text>
<text x="8.5" y="772.0" fill="#000000" font-size="12.5" text-anchor="start" font-weight="bold" textLength="47.0" lengthAdjust="spacingAndGlyphs">MinWert</text>
<text x="8.5" y="788.0" fill="#000000" font-size="12.5" text-anchor="start" font-weight="bold" textLength="50.0" lengthAdjust="spacingAndGlyphs">MaxWert</text>
<text x="8.5" y="804.0" fill="#000000" font-size="12.5" text-anchor="start" font-weight="bold" textLength="72.0" lengthAdjust="spacingAndGlyphs">Durchschnitt</text>
<text x="95.0" y="756.0" fill="#000000" font-size="12.5" text-anchor="start" font-weight="bold" textLength="50.0" lengthAdjust="spacingAndGlyphs">Temp. A.</text>
<text x="198.5" y="756.0" fill="#000000" font-size="12.5" text-anchor="end" font-weight="bold" textLength="12.5" lengthAdjust="spacingAndGlyphs">°C</text>
<text x="100.0" y="772.0" fill="#000000" font-size="12.5" text-anchor="start" textLength="27.5" lengthAdjust="spacingAndGlyphs">23:55</text>
<text x="198.0" y="772.0" fill="#000000" font-size="12.5" text-anchor="end" textLength="20.0" lengthAdjust="spacingAndGlyphs">11.1</text>
<text x="100.0" y="788.0" fill="#000000" font-size="12.5" text-anchor="start" textLength="27.5" lengthAdjust="spacingAndGlyphs">12:20</text>
<text x="198.5" y="788.0" fill="#000000" font-size="12.5" text-anchor="end" textLength="21.0" lengthAdjust="spacingAndGlyphs">13.3</text>
<text x="198.5" y="804.0" fill="#000000" font-size="12.5" text-anchor="end" textLength="27.0" lengthAdjust="spacingAndGlyphs">12.08</text>
<text x="213.0" y="756.0" fill="#000000" font-size="12.5" text-anchor="start" font-weight="bold" textLength="46.0" lengthAdjust="spacingAndGlyphs">Temp. I.</text>
<text x="316.5" y="756.0" fill="#000000" font-size="12.5" text-anchor="end" font-weight="bold" textLength="12.5" lengthAdjust="spacingAndGlyphs">°C</text>
<text x="218.5" y="772.0" fill="#000000" font-size="12.5" text-anchor="start" textLength="27.0" lengthAdjust="spacingAndGlyphs">14:09</text>
<text x="316.5" y="772.0" fill="#000000" font-size="12.5" text-anchor="end" textLength="21.0" lengthAdjust="spacingAndGlyphs">23.2</text>
<text x="218.5" y="788.0" fill="#000000" font-size="12.5" text-anchor="start" textLength="27.0" lengthAdjust="spacingAndGlyphs">21:25</text>
<text x="316.5" y="788.0" fill="#000000" font-size="12.5" text-anchor="end" textLength="21.0" lengthAdjust="spacingAndGlyphs">25.4</text>
<text x="316.5" y="804.0" fill="#000000" font-size="12.5" text-anchor="end" textLength="27.0" lengthAdjust="spacingAndGlyphs">24.16</text>
<text x="684.5" y="756.0" fill="#000000" font-size="12.5" text-anchor="start" font-weight="bold" textLength="53.5" lengthAdjust="spacingAndGlyphs">Luftdruck</text>
<text x="788.5" y="756.0" fill="#000000" font-size="12.5" text-anchor="end" font-weight="bold" textLength="22.0" lengthAdjust="spacingAndGlyphs">hPa</text>
<text x="690.5" y="772.0" fill="#000000" font-size="12.5" text-anchor="start" textLength="27.0" lengthAdjust="spacingAndGlyphs">03:25</text>
<text x="788.5" y="772.0" fill="#000000" font-size="12.5" text-anchor="end" textLength="33.0" lengthAdjust="spacingAndGlyphs">1017.9</text>
<text x="690.5" y="788.0" fill="#000000" font-size="12.5" text-anchor="start" textLength="27.0" lengthAdjust="spacingAndGlyphs">21:10</text>
<text x="788.5" y="788.0" fill="#000000" font-size="12.5" text-anchor="end" textLength="33.0" lengthAdjust="spacingAndGlyphs">1019.5</text>
<text x="684.5" y="804.0" fill="#000000" font-size="12.5" text-anchor="start" textLength="51.0" lengthAdjust="spacingAndGlyphs">^0.7hPa/h</text>
<text x="788.5" y="804.0" fill="#000000" font-size="12.5" text-anchor="end" textLength="33.0" lengthAdjust="spacingAndGlyphs">1018.7</text>
<text x="802.5" y="756.0" fill="#000000" font-size="12.5" text-anchor="start" font-weight="bold" textLength="37.0" lengthAdjust="spacingAndGlyphs">Regen</text>
<text x="906.0" y="756.0" fill="#000000" font-size="12.5" text-anchor="end" font-weight="bold" textLength="22.0" lengthAdjust="spacingAndGlyphs">l/m²</text>
<text x="808.5" y="788.0" fill="#000000" font-size="12.5" text-anchor="start" textLength="27.0" lengthAdjust="spacingAndGlyphs">00:05</text>
<text x="906.5" y="788.0" fill="#000000" font-size="12.5" text-anchor="end" textLength="15.0" lengthAdjust="spacingAndGlyphs">0.0</text>
<text x="802.5" y="804.0" fill="#000000" font-size="12.5" text-anchor="start" textLength="38.0" lengthAdjust="spacingAndGlyphs">Gesamt:</text>
<text x="906.5" y="804.0" fill="#000000" font-size="12.5" text-anchor="end" textLength="15.0" lengthAdjust="spacingAndGlyphs">0.0</text>
<text x="920.5" y="756.0" fill="#000000" font-size="12.5" text-anchor="start" font-weight="bold" textLength="29.0" lengthAdjust="spacingAndGlyphs">Wind</text>
<text x="1021.5" y="756.0" fill="#000000" font-size="12.5" text-anchor="end" font-weight="bold" textLength="29.0" lengthAdjust="spacingAndGlyphs">km/h</text>
<text x="921.0" y="772.0" fill="#000000" font-size="12.5" text-anchor="start" textLength="44.0" lengthAdjust="spacingAndGlyphs">Ø 10 min.</text>
<text x="1022.5" y="772.0" fill="#000000" font-size="12.5" text-anchor="end" textLength="15.0" lengthAdjust="spacingAndGlyphs">0.0</text>
<text x="926.5" y="788.0" fill="#000000" font-size="12.5" text-anchor="start" textLength="27.0" lengthAdjust="spacingAndGlyphs">00:05</text>
<text x="1022.5" y="788.0" fill="#000000" font-size="12.5" text-anchor="end" textLength="34.0" lengthAdjust="spacingAndGlyphs">NO 0.0</text>
<text x="1022.5" y="804.0" fill="#000000" font-size="12.5" text-anchor="end" textLength="15.0" lengthAdjust="spacingAndGlyphs">0.0</text>
</g>
</svg>
</body></html>
